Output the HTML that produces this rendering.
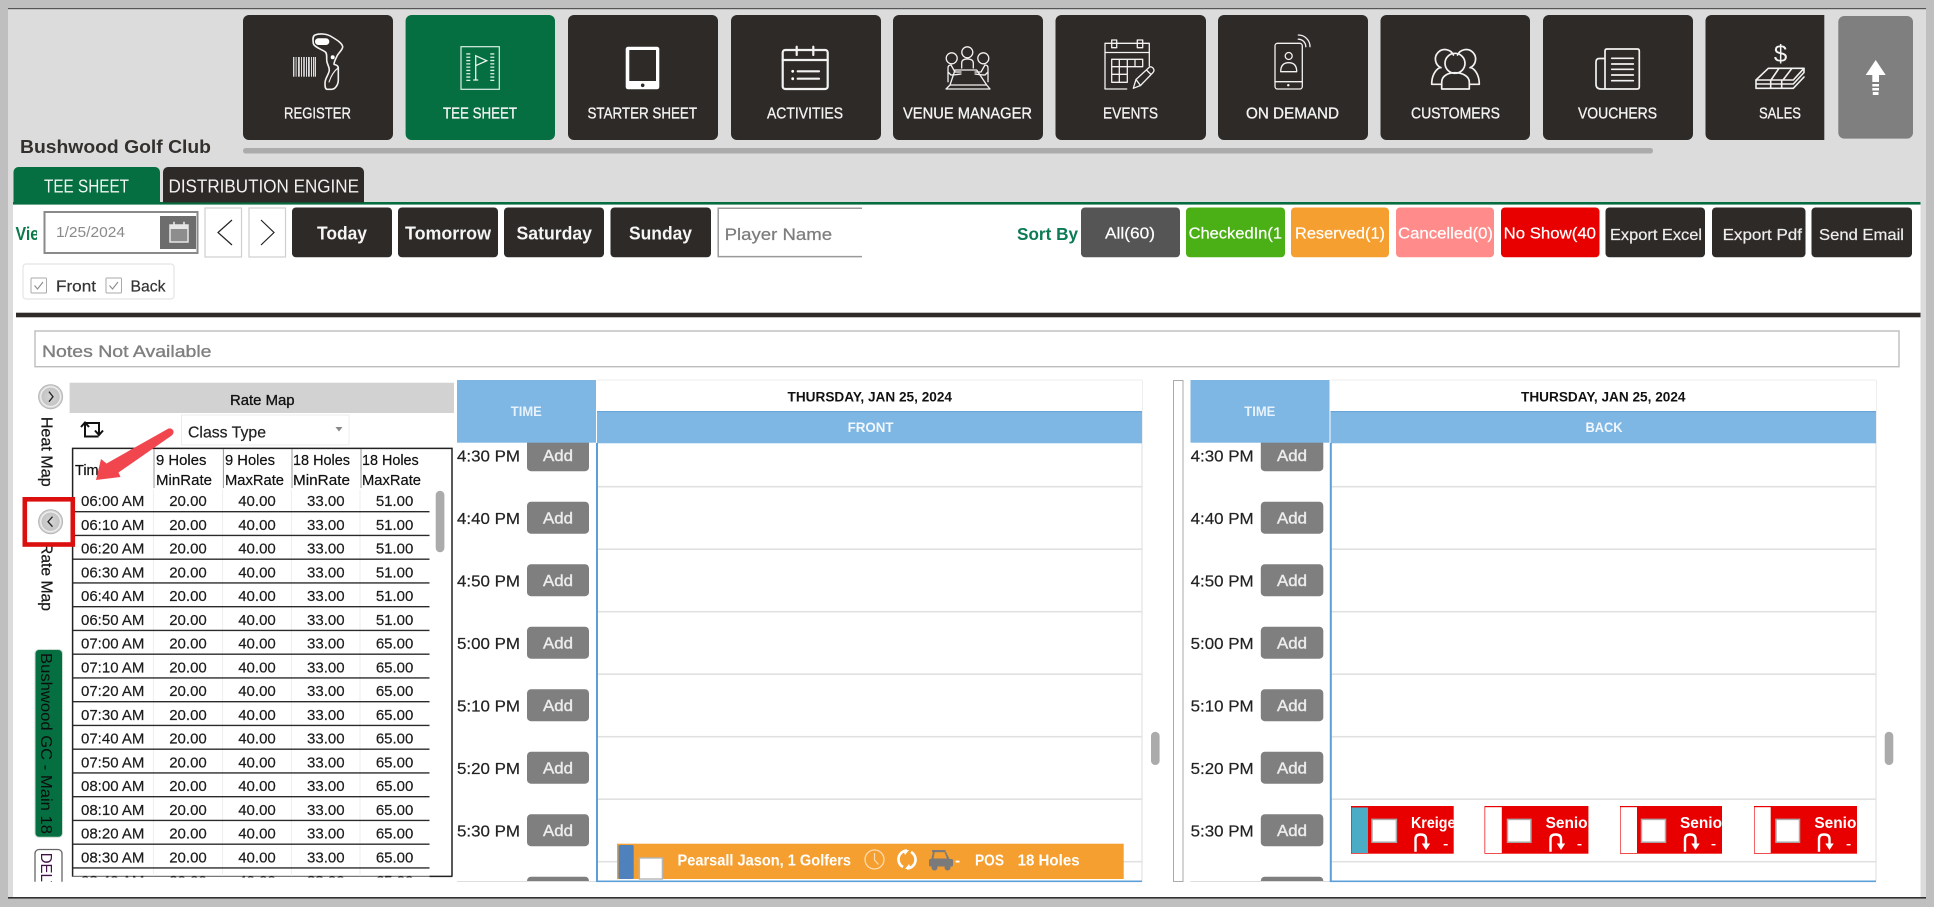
<!DOCTYPE html>
<html lang="en"><head><meta charset="utf-8"><title>Tee Sheet</title>
<style>
html,body{margin:0;padding:0;background:#bfbfbf;width:1934px;height:907px;overflow:hidden}
svg{display:block;font-family:"Liberation Sans",sans-serif}
.w{fill:#fff}.b{font-weight:700}
.nav{font-size:15.5px;fill:#f4f4f4;stroke:#f4f4f4;stroke-width:.3px}
.btn{font-size:18px;font-weight:700;fill:#f5f5f5}
.st{font-size:15.5px;fill:#fff;stroke:#fff;stroke-width:.2px}
.ex{font-size:16px;fill:#eee;stroke:#eee;stroke-width:.2px}
.t{font-size:15px;fill:#1c1c1c;stroke:#1c1c1c;stroke-width:.2px;text-anchor:middle}
.h{font-size:14.5px;fill:#111;stroke:#111;stroke-width:.2px}
.tm{font-size:16px;fill:#222;stroke:#222;stroke-width:.2px}
.ad{font-size:16px;fill:#ececec;stroke:#ececec;stroke-width:.4px;text-anchor:middle}
.vt{font-size:16px;fill:#1a1a1a;stroke:#1a1a1a;stroke-width:.25px}
.ic{fill:none;stroke:#f2f2f2;stroke-linejoin:round;stroke-linecap:round}
.ln{stroke:#2a2a2a;stroke-width:1.4}
.rl{stroke:#e1e1e1;stroke-width:1.6}
.ck{fill:#fff;stroke:#aaa}
.u{fill:none;stroke:#fff;stroke-width:2.4}
</style></head><body>
<svg width="1934" height="907" viewBox="0 0 1934 907" xmlns="http://www.w3.org/2000/svg">
<defs>
<clipPath id="cb"><rect x="0" y="0" width="1934" height="881.7"/></clipPath>
<clipPath id="ct"><rect x="60" y="440" width="400" height="437.5"/></clipPath>
<clipPath id="cv"><rect x="0" y="200" width="37" height="60"/></clipPath>
<clipPath id="cd"><rect x="30" y="840" width="40" height="41.7"/></clipPath>
<clipPath id="c1"><rect x="1351" y="806" width="102.7" height="48"/></clipPath>
<clipPath id="c2"><rect x="1484" y="806" width="104.4" height="48"/></clipPath>
<clipPath id="c3"><rect x="1620" y="806" width="102" height="48"/></clipPath>
<clipPath id="c4"><rect x="1754" y="806" width="103" height="48"/></clipPath>
<radialGradient id="cg"><stop offset="0" stop-color="#d5d5d5"/><stop offset=".7" stop-color="#c4c4c4"/><stop offset=".78" stop-color="#f5f5f5"/><stop offset="1" stop-color="#a8a8a8"/></radialGradient>
</defs>

<!-- frame -->
<rect width="1934" height="907" fill="#bfbfbf"/>
<rect x="8" y="9" width="1918" height="888" fill="#dcdcdc"/>
<rect x="8" y="8" width="1918" height="1.2" fill="#555"/>
<rect x="13" y="204" width="1907.5" height="693" fill="#fff"/>
<rect x="8" y="897" width="1918" height="1.6" fill="#333"/>
<rect x="13" y="202" width="1907.5" height="2.6" fill="#056d40"/>

<!-- nav buttons -->
<rect x="243" y="15" width="150" height="125" rx="6" fill="#2e2a27"/>
<rect x="405.6" y="15" width="149.4" height="125" rx="6" fill="#056f41"/>
<rect x="568" y="15" width="150" height="125" rx="6" fill="#2e2a27"/>
<rect x="731" y="15" width="150" height="125" rx="6" fill="#2e2a27"/>
<rect x="893" y="15" width="150" height="125" rx="6" fill="#2e2a27"/>
<rect x="1055.5" y="15" width="150.5" height="125" rx="6" fill="#2e2a27"/>
<rect x="1218" y="15" width="150" height="125" rx="6" fill="#2e2a27"/>
<rect x="1380.5" y="15" width="149.5" height="125" rx="6" fill="#2e2a27"/>
<rect x="1543" y="15" width="150" height="125" rx="6" fill="#2e2a27"/>
<path d="M1711.5 15H1824.3V140H1711.5a6 6 0 0 1-6-6V21a6 6 0 0 1 6-6z" fill="#2e2a27"/>
<rect x="1838.3" y="16" width="74.7" height="122.6" rx="6" fill="#7f7f7f"/>
<rect x="243" y="148" width="1410" height="5.5" rx="2.7" fill="#ababab"/>

<text class="nav" x="284" y="118.5" textLength="67" lengthAdjust="spacingAndGlyphs">REGISTER</text>
<text class="nav" x="443" y="118.5" textLength="74" lengthAdjust="spacingAndGlyphs">TEE SHEET</text>
<text class="nav" x="587.5" y="118.5" textLength="109.5" lengthAdjust="spacingAndGlyphs">STARTER SHEET</text>
<text class="nav" x="767" y="118.5" textLength="76" lengthAdjust="spacingAndGlyphs">ACTIVITIES</text>
<text class="nav" x="903" y="118.5" textLength="129" lengthAdjust="spacingAndGlyphs">VENUE MANAGER</text>
<text class="nav" x="1103" y="118.5" textLength="55" lengthAdjust="spacingAndGlyphs">EVENTS</text>
<text class="nav" x="1246" y="118.5" textLength="93" lengthAdjust="spacingAndGlyphs">ON DEMAND</text>
<text class="nav" x="1411" y="118.5" textLength="89" lengthAdjust="spacingAndGlyphs">CUSTOMERS</text>
<text class="nav" x="1578" y="118.5" textLength="79" lengthAdjust="spacingAndGlyphs">VOUCHERS</text>
<text class="nav" x="1759" y="118.5" textLength="42" lengthAdjust="spacingAndGlyphs">SALES</text>

<!-- register icon -->
<g fill="#dcdcdc"><rect x="293" y="57" width="1.4" height="19.7"/><rect x="295.6" y="57" width="1" height="19.7"/><rect x="298" y="57" width="1.8" height="19.7"/><rect x="301" y="57" width="1" height="19.7"/><rect x="303.2" y="57" width="1.6" height="19.7"/><rect x="306" y="57" width="1" height="19.7"/><rect x="308" y="57" width="1.8" height="19.7"/><rect x="311" y="57" width="1" height="19.7"/><rect x="313" y="57" width="1.4" height="19.7"/><rect x="315" y="57" width="1" height="19.7"/></g>
<path class="ic" stroke-width="1.6" d="M315 35C320 33 328 34 332 37C337 40 342 43 342.7 46.7C342.7 50 338 53 336.7 56.7C335 60 334 62 334 64.3C336 65 338.3 65.5 338.3 68.3V80C338.3 85 335 89.3 331.7 89.3H327C325 89 325 86 325 83C325 78 329.3 74 329.3 70C329.3 66 326.7 64 326.7 60C326.7 56 327 53 325 51.7C321 49 314 47 313.3 43.3C312.7 39 312.7 36 315 35z"/>
<rect x="315" y="38.3" width="14.3" height="6.7" rx="3.3" fill="#fff"/>
<circle cx="332.7" cy="57.3" r="2" fill="#fff"/>
<path class="ic" d="M338 68C334 71 331 76 329 82" stroke-width="1.1"/>

<!-- tee sheet icon -->
<rect x="461" y="46.7" width="38.3" height="42.6" fill="none" stroke="#dfeee6" stroke-width="1.2"/>
<path d="M468.3 53.3V81.7M492.3 53.3V81.7" stroke="#dfeee6" stroke-width="4" stroke-dasharray="1.3 2" fill="none"/>
<path d="M475.7 80V55.7L486.7 60.7L475.7 65.7M473.2 80H478.2" fill="none" stroke="#eef6f1" stroke-width="1.3"/>

<!-- tablet icon -->
<rect x="625.7" y="46.7" width="33.6" height="42.6" rx="2.5" fill="#fff"/>
<rect x="629.3" y="50" width="26.7" height="31" fill="#2e2a27"/>
<circle cx="642.7" cy="85.3" r="1.8" fill="#2e2a27"/>

<!-- activities icon -->
<rect class="ic" x="782.7" y="50" width="45" height="39" rx="2.5" stroke-width="2.2"/>
<path class="ic" stroke-width="2.2" d="M782.7 60H827.7M796.7 46.7V55M813.3 46.7V55M797.7 71.3H819M797.7 78.7H819"/>
<circle cx="792.7" cy="71.3" r="1.4" fill="#fff"/><circle cx="792.7" cy="78.7" r="1.4" fill="#fff"/>

<!-- venue icon -->
<g class="ic" stroke-width="1.3">
<circle cx="967.3" cy="52.3" r="5.5"/><circle cx="951.7" cy="58.3" r="5.5"/><circle cx="983.3" cy="58.3" r="5.5"/>
<path d="M961.7 68V63Q961.7 59 967.3 59Q973.3 59 973.3 63V68"/>
<path d="M955 70H976.7L986.7 85L990 89H946L950 85zM950 85H986.7"/>
<path d="M948 81.7V68Q948 65 951 65L955 72H961M948 72L951 75Q954 75 961 74"/>
<path d="M988 81.7V68Q988 65 985 65L981 72H975M988 72L985 75Q982 75 975 74"/>
</g>

<!-- events icon -->
<g class="ic" stroke-width="1.3">
<path d="M1126.7 89H1105V43.3H1149.3V66M1105 52.5H1149.3"/>
<rect x="1111.7" y="40" width="5" height="7.7"/><rect x="1137.3" y="40" width="5.4" height="7.7"/>
<path d="M1111.7 59.3H1142.7V66.7H1127.3V82.3H1111.7zM1111.7 66.7H1127.3M1111.7 74.3H1127.3M1119.3 59.3V82.3M1127.3 59.3V66.7M1135 59.3V66.7"/>
<path d="M1133.3 88.3L1136 79.5L1149 67.5Q1151 66 1153 68Q1155 70.5 1153 72.5L1140.5 85.5zM1136 79.5L1140.5 85.5M1146.5 70L1151 74.5"/>
</g>

<!-- on demand icon -->
<g class="ic" stroke-width="1.3">
<rect x="1275" y="43.3" width="27.3" height="45.7" rx="2.5"/>
<path d="M1275 81.7H1302.3M1280.7 71.7H1296.7Q1296.7 62.7 1288.7 62.7Q1280.7 62.7 1280.7 71.7z"/>
<circle cx="1288.7" cy="56" r="3.5"/>
<path d="M1298.3 39.2A7.5 7.5 0 0 1 1305.8 46.7M1298.3 35A11.7 11.7 0 0 1 1310 46.7"/>
</g>
<circle cx="1288.3" cy="85.2" r="1.2" fill="#fff"/>

<!-- customers icon -->
<g class="ic" stroke-width="1.7">
<circle cx="1455" cy="63.3" r="10"/>
<path d="M1453.5 55A9.5 9.5 0 1 0 1441 67.7M1457.5 55A9.5 9.5 0 1 1 1470 67.7"/>
<path d="M1441.7 89V82C1441.7 76 1448 72.7 1455 72.7C1462 72.7 1469.3 76 1469.3 82V89z"/>
<path d="M1441.7 84.3H1431.7C1431.7 76 1435 70 1440 67.5M1469.3 84.3H1479.3C1479.3 76 1476 70 1471 67.5"/>
</g>

<!-- vouchers icon -->
<g class="ic" stroke-width="1.7">
<path d="M1605 89H1637.3Q1639.3 89 1639.3 87V51Q1639.3 49 1637.3 49H1607Q1605 49 1605 51V89zM1605 58.5H1599.5Q1596 58.5 1596 62V84Q1596 89 1601 89H1605"/>
<path d="M1611.7 58.3H1633.3M1611.7 64H1633.3M1611.7 69.3H1633.3M1611.7 75H1633.3M1611.7 80.7H1633.3"/>
</g>

<!-- sales icon -->
<text x="1780.5" y="62" font-size="24" fill="#f5f5f5" text-anchor="middle">$</text>
<g class="ic" stroke-width="1.6">
<path d="M1768.3 68.3H1804L1793.3 80H1756zM1779 68.3L1771 80M1792 68.3L1783 80"/>
<path d="M1756 80V84H1793.3L1804 72.5V68.3M1756 84V88.3H1793.3L1804 77M1770.7 80V88.3M1781.7 80V88.3"/>
</g>

<!-- up arrow -->
<path d="M1875.7 60L1885.7 75H1879V82H1872.3V75H1865.7z" fill="#fff"/>
<path d="M1872.3 84h6.7v2.5h-6.7zM1872.3 88h6.7v2.5h-6.7zM1872.8 92h5.7v3h-5.7z" fill="#fff"/>

<!-- title & tabs -->
<text x="20" y="153" font-size="18" font-weight="700" fill="#33302d" textLength="191" lengthAdjust="spacingAndGlyphs">Bushwood Golf Club</text>
<path d="M13.5 203V172a5 5 0 0 1 5-5H155a5 5 0 0 1 5 5V203z" fill="#056f41"/>
<path d="M163 202.5V172a5 5 0 0 1 5-5H359a5 5 0 0 1 5 5V202.5z" fill="#2e2a27"/>
<text x="44" y="192.5" font-size="18.5" fill="#f0f6f2" textLength="85" lengthAdjust="spacingAndGlyphs">TEE SHEET</text>
<text x="168.5" y="192.5" font-size="18.5" fill="#f2f2f2" textLength="190.5" lengthAdjust="spacingAndGlyphs">DISTRIBUTION ENGINE</text>

<!-- toolbar -->
<text x="15.5" y="240" font-size="18" font-weight="700" fill="#0a7a4a" clip-path="url(#cv)" textLength="36" lengthAdjust="spacingAndGlyphs">View</text>
<rect x="44.5" y="212" width="153" height="41" fill="#fff" stroke="#8a8a8a" stroke-width="2"/>
<text x="56" y="237" font-size="15" fill="#8a8a8a" textLength="69" lengthAdjust="spacingAndGlyphs">1/25/2024</text>
<rect x="160" y="216" width="36" height="33" fill="#6d6d6d"/>
<rect x="170" y="225" width="18" height="17" fill="#8d8d8d" stroke="#e6e6e6" stroke-width="1.5"/>
<rect x="170" y="225" width="18" height="4" fill="#e6e6e6"/>
<path d="M174 221.7V227M184 221.7V227" stroke="#e6e6e6" stroke-width="1.6"/>

<rect x="205" y="208" width="36.5" height="49" fill="#fff" stroke="#cfcfcf" stroke-width="1.2"/>
<rect x="249" y="208" width="36.5" height="49" fill="#fff" stroke="#cfcfcf" stroke-width="1.2"/>
<path d="M232 220L218 232.5L232 245M261 220L274 232.5L261 245" fill="none" stroke="#222" stroke-width="1.2"/>

<rect x="292" y="207.5" width="100" height="49.8" rx="4" fill="#2e2a27"/>
<rect x="398" y="207.5" width="100" height="49.8" rx="4" fill="#2e2a27"/>
<rect x="504" y="207.5" width="100" height="49.8" rx="4" fill="#2e2a27"/>
<rect x="610.5" y="207.5" width="100.5" height="49.8" rx="4" fill="#2e2a27"/>
<text class="btn" x="317" y="239.5" textLength="50" lengthAdjust="spacingAndGlyphs">Today</text>
<text class="btn" x="405" y="239.5" textLength="86" lengthAdjust="spacingAndGlyphs">Tomorrow</text>
<text class="btn" x="516.5" y="239.5" textLength="75.5" lengthAdjust="spacingAndGlyphs">Saturday</text>
<text class="btn" x="629" y="239.5" textLength="63" lengthAdjust="spacingAndGlyphs">Sunday</text>

<path d="M862 208.2H718.2V256.6H862" fill="#fff" stroke="#9a9a9a" stroke-width="1.5"/>
<text x="724.6" y="240" font-size="17" fill="#7d7d7d" textLength="107.5" lengthAdjust="spacingAndGlyphs" style="stroke:#7d7d7d;stroke-width:.25">Player Name</text>

<text x="1017" y="240" font-size="17.5" font-weight="700" fill="#0b7a55" textLength="61" lengthAdjust="spacingAndGlyphs">Sort By</text>
<rect x="1081" y="207.5" width="99" height="49.8" rx="4" fill="#555"/>
<rect x="1186" y="207.5" width="99" height="49.8" rx="4" fill="#4bb016"/>
<rect x="1291" y="207.5" width="98" height="49.8" rx="4" fill="#f59f30"/>
<rect x="1396" y="207.5" width="98" height="49.8" rx="4" fill="#ff8c8a"/>
<rect x="1501" y="207.5" width="98.5" height="49.8" rx="4" fill="#e80000"/>
<rect x="1605.5" y="207.5" width="99.5" height="49.8" rx="4" fill="#2e2a27"/>
<rect x="1712" y="207.5" width="93.5" height="49.8" rx="4" fill="#2e2a27"/>
<rect x="1811.5" y="207.5" width="100.5" height="49.8" rx="4" fill="#2e2a27"/>
<text class="st" x="1105" y="238.5" textLength="50" lengthAdjust="spacingAndGlyphs">All(60)</text>
<text class="st" x="1188.6" y="238.5" textLength="93.4" lengthAdjust="spacingAndGlyphs">CheckedIn(1</text>
<text class="st" x="1295" y="238.5" textLength="90" lengthAdjust="spacingAndGlyphs">Reserved(1)</text>
<text class="st" x="1398" y="238.5" textLength="95" lengthAdjust="spacingAndGlyphs">Cancelled(0)</text>
<text class="st" x="1503.6" y="238.5" textLength="92.4" lengthAdjust="spacingAndGlyphs">No Show(40</text>
<text class="ex" x="1610" y="240" textLength="92" lengthAdjust="spacingAndGlyphs">Export Excel</text>
<text class="ex" x="1722.6" y="240" textLength="79.4" lengthAdjust="spacingAndGlyphs">Export Pdf</text>
<text class="ex" x="1819" y="240" textLength="85" lengthAdjust="spacingAndGlyphs">Send Email</text>

<!-- front/back -->
<rect x="23" y="264" width="151" height="35" rx="3" fill="#fff" stroke="#e4e4e4" stroke-width="1.2"/>
<rect class="ck" x="31" y="278" width="15.5" height="15" rx="1" stroke-width="1"/>
<rect class="ck" x="106" y="278" width="15.5" height="15" rx="1" stroke-width="1"/>
<path d="M34.5 285.5l3 3.5l5.5-7M109.5 285.5l3 3.5l5.5-7" fill="none" stroke="#8c8c8c" stroke-width="1.1"/>
<text x="56" y="291.5" font-size="16" fill="#333" textLength="40" lengthAdjust="spacingAndGlyphs" style="stroke:#333;stroke-width:.2">Front</text>
<text x="130.5" y="291.5" font-size="16" fill="#333" textLength="35" lengthAdjust="spacingAndGlyphs" style="stroke:#333;stroke-width:.2">Back</text>

<rect x="16" y="312.7" width="1904.5" height="4.6" fill="#2e2a27"/>
<rect x="35" y="331" width="1864" height="35.7" fill="#fff" stroke="#bdbdbd" stroke-width="1.4"/>
<text x="42" y="357" font-size="17" fill="#7f7f7f" textLength="169.5" lengthAdjust="spacingAndGlyphs" style="stroke:#7f7f7f;stroke-width:.35">Notes Not Available</text>

<!-- rate map -->
<rect x="69.6" y="382.7" width="384.4" height="30.3" fill="#d2d2d2"/>
<text x="230" y="405" font-size="14.5" fill="#111" textLength="64.6" lengthAdjust="spacingAndGlyphs" style="stroke:#111;stroke-width:.3">Rate Map</text>
<path d="M85 427V423H99V434.5M95 430.5l4 4.5l4-4.5M98.5 436.5H85V424M81 427l4-4.5l4 4.5" fill="none" stroke="#111" stroke-width="2"/>
<rect x="181.5" y="415" width="167.5" height="30" fill="#fff" stroke="#ececec"/>
<text x="188" y="437.5" font-size="16" fill="#222" textLength="78" lengthAdjust="spacingAndGlyphs" style="stroke:#222;stroke-width:.2">Class Type</text>
<path d="M335.5 427H342.5L339 431.5z" fill="#888"/>

<circle cx="50.6" cy="396.7" r="12.5" fill="url(#cg)"/>
<path d="M49 391.7L53 396.7L49 401.7" fill="none" stroke="#222" stroke-width="1.3"/>
<text class="vt" transform="translate(41.5,416.7) rotate(90)" textLength="70" lengthAdjust="spacingAndGlyphs">Heat Map</text>
<text class="vt" transform="translate(41.5,543) rotate(90)" textLength="68" lengthAdjust="spacingAndGlyphs">Rate Map</text>

<rect x="35" y="649.5" width="27.5" height="187.8" rx="4" fill="#056f41" stroke="#c8dcd0" stroke-width="1"/>
<text transform="translate(41,653) rotate(90)" font-size="16" fill="#0d0d0d" textLength="181" lengthAdjust="spacingAndGlyphs">Bushwood GC - Main 18</text>
<g clip-path="url(#cd)">
<rect x="35" y="849.5" width="27" height="50" rx="4" fill="#fff" stroke="#666" stroke-width="1.3"/>
<text transform="translate(41,852.7) rotate(90)" font-size="16" fill="#43104a" textLength="46" lengthAdjust="spacingAndGlyphs">DELTA</text>
</g>

<!-- table -->
<path d="M72.6 876.7V448.4H452V876.7M429.5 876.4H452" fill="none" stroke="#222" stroke-width="1.5"/>
<path d="M72.6 876.4H429.5" stroke="#777" stroke-width="1.2"/>
<path d="M154 449V488M223.4 449V488M292 449V488M361 449V488" stroke="#999" stroke-width="1"/>
<path d="M153.4 490V876M222.6 490V876M291.4 490V876M360 490V876" stroke="#eeeeee" stroke-width="1"/>
<text class="h" x="75" y="475">Time</text>
<text class="h" x="156" y="465" textLength="50.4" lengthAdjust="spacingAndGlyphs">9 Holes</text>
<text class="h" x="156" y="485" textLength="56" lengthAdjust="spacingAndGlyphs">MinRate</text>
<text class="h" x="225" y="465" textLength="50" lengthAdjust="spacingAndGlyphs">9 Holes</text>
<text class="h" x="225" y="485" textLength="59" lengthAdjust="spacingAndGlyphs">MaxRate</text>
<text class="h" x="293" y="465" textLength="57" lengthAdjust="spacingAndGlyphs">18 Holes</text>
<text class="h" x="293" y="485" textLength="57" lengthAdjust="spacingAndGlyphs">MinRate</text>
<text class="h" x="362" y="465" textLength="56.7" lengthAdjust="spacingAndGlyphs">18 Holes</text>
<text class="h" x="362" y="485" textLength="59" lengthAdjust="spacingAndGlyphs">MaxRate</text>

<g clip-path="url(#ct)">
<text class="t" y="506"><tspan x="112.7">06:00 AM</tspan><tspan x="188">20.00</tspan><tspan x="257">40.00</tspan><tspan x="325.8">33.00</tspan><tspan x="394.6">51.00</tspan></text>
<text class="t" y="529.75"><tspan x="112.7">06:10 AM</tspan><tspan x="188">20.00</tspan><tspan x="257">40.00</tspan><tspan x="325.8">33.00</tspan><tspan x="394.6">51.00</tspan></text>
<text class="t" y="553.5"><tspan x="112.7">06:20 AM</tspan><tspan x="188">20.00</tspan><tspan x="257">40.00</tspan><tspan x="325.8">33.00</tspan><tspan x="394.6">51.00</tspan></text>
<text class="t" y="577.25"><tspan x="112.7">06:30 AM</tspan><tspan x="188">20.00</tspan><tspan x="257">40.00</tspan><tspan x="325.8">33.00</tspan><tspan x="394.6">51.00</tspan></text>
<text class="t" y="601"><tspan x="112.7">06:40 AM</tspan><tspan x="188">20.00</tspan><tspan x="257">40.00</tspan><tspan x="325.8">33.00</tspan><tspan x="394.6">51.00</tspan></text>
<text class="t" y="624.75"><tspan x="112.7">06:50 AM</tspan><tspan x="188">20.00</tspan><tspan x="257">40.00</tspan><tspan x="325.8">33.00</tspan><tspan x="394.6">51.00</tspan></text>
<text class="t" y="648.5"><tspan x="112.7">07:00 AM</tspan><tspan x="188">20.00</tspan><tspan x="257">40.00</tspan><tspan x="325.8">33.00</tspan><tspan x="394.6">65.00</tspan></text>
<text class="t" y="672.25"><tspan x="112.7">07:10 AM</tspan><tspan x="188">20.00</tspan><tspan x="257">40.00</tspan><tspan x="325.8">33.00</tspan><tspan x="394.6">65.00</tspan></text>
<text class="t" y="696"><tspan x="112.7">07:20 AM</tspan><tspan x="188">20.00</tspan><tspan x="257">40.00</tspan><tspan x="325.8">33.00</tspan><tspan x="394.6">65.00</tspan></text>
<text class="t" y="719.75"><tspan x="112.7">07:30 AM</tspan><tspan x="188">20.00</tspan><tspan x="257">40.00</tspan><tspan x="325.8">33.00</tspan><tspan x="394.6">65.00</tspan></text>
<text class="t" y="743.5"><tspan x="112.7">07:40 AM</tspan><tspan x="188">20.00</tspan><tspan x="257">40.00</tspan><tspan x="325.8">33.00</tspan><tspan x="394.6">65.00</tspan></text>
<text class="t" y="767.25"><tspan x="112.7">07:50 AM</tspan><tspan x="188">20.00</tspan><tspan x="257">40.00</tspan><tspan x="325.8">33.00</tspan><tspan x="394.6">65.00</tspan></text>
<text class="t" y="791"><tspan x="112.7">08:00 AM</tspan><tspan x="188">20.00</tspan><tspan x="257">40.00</tspan><tspan x="325.8">33.00</tspan><tspan x="394.6">65.00</tspan></text>
<text class="t" y="814.75"><tspan x="112.7">08:10 AM</tspan><tspan x="188">20.00</tspan><tspan x="257">40.00</tspan><tspan x="325.8">33.00</tspan><tspan x="394.6">65.00</tspan></text>
<text class="t" y="838.5"><tspan x="112.7">08:20 AM</tspan><tspan x="188">20.00</tspan><tspan x="257">40.00</tspan><tspan x="325.8">33.00</tspan><tspan x="394.6">65.00</tspan></text>
<text class="t" y="862.25"><tspan x="112.7">08:30 AM</tspan><tspan x="188">20.00</tspan><tspan x="257">40.00</tspan><tspan x="325.8">33.00</tspan><tspan x="394.6">65.00</tspan></text>
<text class="t" y="886"><tspan x="112.7">08:40 AM</tspan><tspan x="188">20.00</tspan><tspan x="257">40.00</tspan><tspan x="325.8">33.00</tspan><tspan x="394.6">65.00</tspan></text>
</g>
<path class="ln" d="M72.6 511.7H429.5M72.6 535.45H429.5M72.6 559.2H429.5M72.6 582.95H429.5M72.6 606.7H429.5M72.6 630.45H429.5M72.6 654.2H429.5M72.6 677.95H429.5M72.6 701.7H429.5M72.6 725.45H429.5M72.6 749.2H429.5M72.6 772.95H429.5M72.6 796.7H429.5M72.6 820.45H429.5M72.6 844.2H429.5M72.6 867.95H429.5"/>
<rect x="435.7" y="490.7" width="8.7" height="61.5" rx="4.3" fill="#ababab"/>

<!-- arrow + highlight -->
<path d="M168.5 428.5Q172 428 173.5 431Q174 434 171 436L118.5 472.5L120.5 477L96 480L101 459L106.5 463.5z" fill="#f2464f"/>
<rect x="24.8" y="499.3" width="48" height="45.2" fill="none" stroke="#dc0f0f" stroke-width="4.6"/>
<circle cx="50.6" cy="521.7" r="12.5" fill="url(#cg)"/>
<path d="M52.5 516.7L48 521.7L52.5 526.7" fill="none" stroke="#222" stroke-width="1.3"/>

<!-- FRONT schedule -->
<path class="rl" d="M597 486.7H1142M597 549.2H1142M597 611.7H1142M597 674.2H1142M597 736.7H1142M597 799.2H1142M597 861.7H1142"/>
<path d="M1142 380V881" stroke="#dedede" stroke-width="1"/>
<g clip-path="url(#cb)">
<g fill="#7f7f7f"><rect x="527" y="439.2" width="62" height="32" rx="4"/><rect x="527" y="501.7" width="62" height="32" rx="4"/><rect x="527" y="564.2" width="62" height="32" rx="4"/><rect x="527" y="626.7" width="62" height="32" rx="4"/><rect x="527" y="689.2" width="62" height="32" rx="4"/><rect x="527" y="751.7" width="62" height="32" rx="4"/><rect x="527" y="814.2" width="62" height="32" rx="4"/><rect x="527" y="876.7" width="62" height="32" rx="4"/></g>
</g>
<g>
<text class="ad" x="558" y="461" textLength="30" lengthAdjust="spacingAndGlyphs">Add</text>
<text class="ad" x="558" y="523.5" textLength="30" lengthAdjust="spacingAndGlyphs">Add</text>
<text class="ad" x="558" y="586" textLength="30" lengthAdjust="spacingAndGlyphs">Add</text>
<text class="ad" x="558" y="648.5" textLength="30" lengthAdjust="spacingAndGlyphs">Add</text>
<text class="ad" x="558" y="711" textLength="30" lengthAdjust="spacingAndGlyphs">Add</text>
<text class="ad" x="558" y="773.5" textLength="30" lengthAdjust="spacingAndGlyphs">Add</text>
<text class="ad" x="558" y="836" textLength="30" lengthAdjust="spacingAndGlyphs">Add</text>
<text class="tm" x="457" y="461.5" textLength="63" lengthAdjust="spacingAndGlyphs">4:30 PM</text>
<text class="tm" x="457" y="524" textLength="63" lengthAdjust="spacingAndGlyphs">4:40 PM</text>
<text class="tm" x="457" y="586.5" textLength="63" lengthAdjust="spacingAndGlyphs">4:50 PM</text>
<text class="tm" x="457" y="649" textLength="63" lengthAdjust="spacingAndGlyphs">5:00 PM</text>
<text class="tm" x="457" y="711.5" textLength="63" lengthAdjust="spacingAndGlyphs">5:10 PM</text>
<text class="tm" x="457" y="774" textLength="63" lengthAdjust="spacingAndGlyphs">5:20 PM</text>
<text class="tm" x="457" y="836.5" textLength="63" lengthAdjust="spacingAndGlyphs">5:30 PM</text>
</g>
<rect x="457" y="881" width="140" height="1" fill="#ddd"/>
<rect x="457" y="380" width="139" height="62.7" fill="#7eb6e4"/>
<rect x="597" y="380" width="545" height="31" fill="#fff"/>
<path d="M597 380H1142" stroke="#eee"/>
<rect x="597" y="411" width="545" height="32.3" fill="#7eb6e4"/>
<rect x="597" y="411" width="545" height="1.2" fill="#6ba6d8"/>
<text x="510.8" y="416" font-size="13.5" font-weight="700" fill="#e8f2fb" textLength="31" lengthAdjust="spacingAndGlyphs">TIME</text>
<text x="787.5" y="401.5" font-size="13.5" font-weight="700" fill="#111" textLength="164.5" lengthAdjust="spacingAndGlyphs">THURSDAY, JAN 25, 2024</text>
<text x="847.6" y="432" font-size="13.5" font-weight="700" fill="#f2f8fd" textLength="46" lengthAdjust="spacingAndGlyphs">FRONT</text>
<rect x="596" y="443" width="2" height="438.7" fill="#5c9fd8"/>
<rect x="596" y="880.5" width="546" height="1.6" fill="#5c9fd8"/>

<!-- orange booking -->
<rect x="617" y="843.7" width="506.7" height="35.3" fill="#f59f30"/>
<rect x="618.5" y="845" width="15.2" height="34" rx="1.5" fill="#4f81bd"/>
<rect x="639.4" y="858" width="23" height="21" fill="#fff" stroke="#b5b5b5" stroke-width="1.4"/>
<text x="677.5" y="865.5" font-size="15.5" font-weight="700" fill="#fff" textLength="173.5" lengthAdjust="spacingAndGlyphs">Pearsall Jason, 1 Golfers</text>
<circle cx="874.5" cy="859.5" r="9.5" fill="none" stroke="#fcdcae" stroke-width="1.3"/>
<path d="M874.5 853V860L878.5 864.5" fill="none" stroke="#fcdcae" stroke-width="1.2"/>
<path d="M907 850.5A8.8 8.8 0 0 0 903 867M907 868.5A8.8 8.8 0 0 0 911 852" fill="none" stroke="#fff" stroke-width="2.6"/>
<path d="M903 850L909 850L905 855zM911 869L905 869L909 864z" fill="#fff"/>
<g fill="#7a7a7a"><rect x="932" y="850" width="13.5" height="2.2"/><path d="M933 852L931 860H950L946 852H944.5L947 858.5H933.5L934.8 852z"/><rect x="929" y="859" width="24" height="7.5" rx="1.5"/><circle cx="934.5" cy="867.5" r="3"/><circle cx="947.5" cy="867.5" r="3"/></g>
<text x="955" y="865.5" font-size="15.5" font-weight="700" fill="#fff">-</text>
<text x="975" y="865.5" font-size="15.5" font-weight="700" fill="#fff" textLength="29" lengthAdjust="spacingAndGlyphs">POS</text>
<text x="1017.6" y="865.5" font-size="15.5" font-weight="700" fill="#fff" textLength="62" lengthAdjust="spacingAndGlyphs">18 Holes</text>

<rect x="1151" y="731.7" width="8.6" height="33.3" rx="4.3" fill="#ababab"/>
<rect x="1173.5" y="380.5" width="9.5" height="501" fill="#fff" stroke="#aaa"/>

<!-- BACK schedule -->
<path class="rl" d="M1331 486.7H1876M1331 549.2H1876M1331 611.7H1876M1331 674.2H1876M1331 736.7H1876M1331 799.2H1876M1331 861.7H1876"/>
<path d="M1876 380V881" stroke="#dedede" stroke-width="1"/>
<g clip-path="url(#cb)">
<g fill="#7f7f7f"><rect x="1260.8" y="439.2" width="62.5" height="32" rx="4"/><rect x="1260.8" y="501.7" width="62.5" height="32" rx="4"/><rect x="1260.8" y="564.2" width="62.5" height="32" rx="4"/><rect x="1260.8" y="626.7" width="62.5" height="32" rx="4"/><rect x="1260.8" y="689.2" width="62.5" height="32" rx="4"/><rect x="1260.8" y="751.7" width="62.5" height="32" rx="4"/><rect x="1260.8" y="814.2" width="62.5" height="32" rx="4"/><rect x="1260.8" y="876.7" width="62.5" height="32" rx="4"/></g>
</g>
<g>
<text class="ad" x="1292" y="461" textLength="30" lengthAdjust="spacingAndGlyphs">Add</text>
<text class="ad" x="1292" y="523.5" textLength="30" lengthAdjust="spacingAndGlyphs">Add</text>
<text class="ad" x="1292" y="586" textLength="30" lengthAdjust="spacingAndGlyphs">Add</text>
<text class="ad" x="1292" y="648.5" textLength="30" lengthAdjust="spacingAndGlyphs">Add</text>
<text class="ad" x="1292" y="711" textLength="30" lengthAdjust="spacingAndGlyphs">Add</text>
<text class="ad" x="1292" y="773.5" textLength="30" lengthAdjust="spacingAndGlyphs">Add</text>
<text class="ad" x="1292" y="836" textLength="30" lengthAdjust="spacingAndGlyphs">Add</text>
<text class="tm" x="1190.6" y="461.5" textLength="63" lengthAdjust="spacingAndGlyphs">4:30 PM</text>
<text class="tm" x="1190.6" y="524" textLength="63" lengthAdjust="spacingAndGlyphs">4:40 PM</text>
<text class="tm" x="1190.6" y="586.5" textLength="63" lengthAdjust="spacingAndGlyphs">4:50 PM</text>
<text class="tm" x="1190.6" y="649" textLength="63" lengthAdjust="spacingAndGlyphs">5:00 PM</text>
<text class="tm" x="1190.6" y="711.5" textLength="63" lengthAdjust="spacingAndGlyphs">5:10 PM</text>
<text class="tm" x="1190.6" y="774" textLength="63" lengthAdjust="spacingAndGlyphs">5:20 PM</text>
<text class="tm" x="1190.6" y="836.5" textLength="63" lengthAdjust="spacingAndGlyphs">5:30 PM</text>
</g>
<rect x="1190.5" y="881" width="140" height="1" fill="#ddd"/>
<rect x="1190.5" y="380" width="139" height="62.7" fill="#7eb6e4"/>
<rect x="1330.5" y="380" width="545.5" height="31" fill="#fff"/>
<path d="M1330.5 380H1876" stroke="#eee"/>
<rect x="1330.5" y="411" width="545.5" height="32.3" fill="#7eb6e4"/>
<rect x="1330.5" y="411" width="545.5" height="1.2" fill="#6ba6d8"/>
<text x="1244.3" y="416" font-size="13.5" font-weight="700" fill="#e8f2fb" textLength="31" lengthAdjust="spacingAndGlyphs">TIME</text>
<text x="1521" y="401.5" font-size="13.5" font-weight="700" fill="#111" textLength="164.5" lengthAdjust="spacingAndGlyphs">THURSDAY, JAN 25, 2024</text>
<text x="1585.5" y="432" font-size="13.5" font-weight="700" fill="#f2f8fd" textLength="37" lengthAdjust="spacingAndGlyphs">BACK</text>
<rect x="1329.8" y="443" width="2" height="438.7" fill="#5c9fd8"/>
<rect x="1329.8" y="880.5" width="546.2" height="1.6" fill="#5c9fd8"/>

<!-- red cards -->
<rect x="1351" y="806" width="102.7" height="47.7" fill="#e80000"/>
<rect x="1351.5" y="807.5" width="16.5" height="45.5" fill="#4bacc6"/>
<rect class="ck" x="1372" y="819.4" width="24.4" height="22.8" stroke-width="1.5"/>
<text x="1411" y="828" font-size="15.5" font-weight="700" fill="#fff" clip-path="url(#c1)" textLength="50" lengthAdjust="spacingAndGlyphs">Kreiger</text>
<path class="u" d="M1415.5 851.7V839Q1415.5 834.5 1420.5 834.5Q1426 834.5 1426 839V845"/>
<path d="M1421.8 843.5H1430.2L1426 850z" fill="#fff"/>
<rect x="1443.7" y="844" width="4" height="1.4" fill="#fff"/>

<rect x="1484.5" y="806" width="103.9" height="47.7" fill="#e80000"/>
<rect x="1485.2" y="807.2" width="16.6" height="45.8" fill="#fff"/>
<rect class="ck" x="1507.5" y="819.4" width="23.4" height="22.8" stroke-width="1.5"/>
<text x="1545.6" y="828" font-size="15.5" font-weight="700" fill="#fff" clip-path="url(#c2)" textLength="48" lengthAdjust="spacingAndGlyphs">Senior</text>
<path class="u" d="M1550.5 851.7V839Q1550.5 834.5 1555.5 834.5Q1561 834.5 1561 839V845"/>
<path d="M1556.8 843.5H1565.2L1561 850z" fill="#fff"/>
<rect x="1577.5" y="844" width="4" height="1.4" fill="#fff"/>

<rect x="1620" y="806" width="102" height="47.7" fill="#e80000"/>
<rect x="1620.6" y="807.2" width="16.4" height="45.8" fill="#fff"/>
<rect class="ck" x="1641.5" y="819.4" width="24" height="22.8" stroke-width="1.5"/>
<text x="1680" y="828" font-size="15.5" font-weight="700" fill="#fff" clip-path="url(#c3)" textLength="48" lengthAdjust="spacingAndGlyphs">Senior</text>
<path class="u" d="M1685 851.7V839Q1685 834.5 1690 834.5Q1695.5 834.5 1695.5 839V845"/>
<path d="M1691.3 843.5H1699.7L1695.5 850z" fill="#fff"/>
<rect x="1711.5" y="844" width="4" height="1.4" fill="#fff"/>

<rect x="1754" y="806" width="103" height="47.7" fill="#e80000"/>
<rect x="1754.6" y="807.2" width="16.1" height="45.8" fill="#fff"/>
<rect class="ck" x="1776" y="819.4" width="23.5" height="22.8" stroke-width="1.5"/>
<text x="1814.4" y="828" font-size="15.5" font-weight="700" fill="#fff" clip-path="url(#c4)" textLength="48" lengthAdjust="spacingAndGlyphs">Senior</text>
<path class="u" d="M1819 851.7V839Q1819 834.5 1824 834.5Q1829.5 834.5 1829.5 839V845"/>
<path d="M1825.3 843.5H1833.7L1829.5 850z" fill="#fff"/>
<rect x="1846.6" y="844" width="4" height="1.4" fill="#fff"/>

<rect x="1884.7" y="731.7" width="8.6" height="33.3" rx="4.3" fill="#ababab"/>
</svg>
</body></html>
